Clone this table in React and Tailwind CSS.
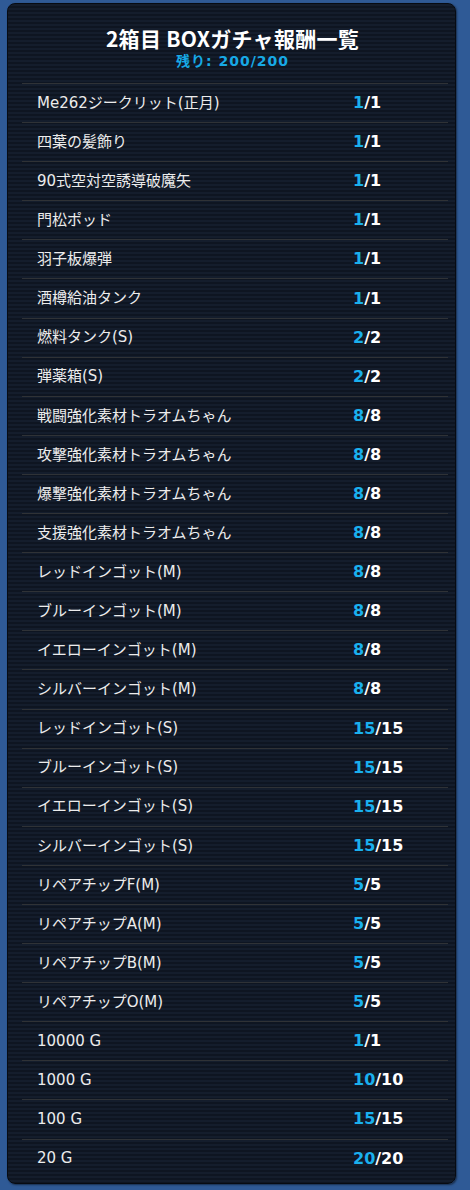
const rewards = [
  ['Me262ジークリット(正月)', 1, 1],
  ['四葉の髪飾り', 1, 1],
  ['90式空対空誘導破魔矢', 1, 1],
  ['門松ポッド', 1, 1],
  ['羽子板爆弾', 1, 1],
  ['酒樽給油タンク', 1, 1],
  ['燃料タンク(S)', 2, 2],
  ['弾薬箱(S)', 2, 2],
  ['戦闘強化素材トラオムちゃん', 8, 8],
  ['攻撃強化素材トラオムちゃん', 8, 8],
  ['爆撃強化素材トラオムちゃん', 8, 8],
  ['支援強化素材トラオムちゃん', 8, 8],
  ['レッドインゴット(M)', 8, 8],
  ['ブルーインゴット(M)', 8, 8],
  ['イエローインゴット(M)', 8, 8],
  ['シルバーインゴット(M)', 8, 8],
  ['レッドインゴット(S)', 15, 15],
  ['ブルーインゴット(S)', 15, 15],
  ['イエローインゴット(S)', 15, 15],
  ['シルバーインゴット(S)', 15, 15],
  ['リペアチップF(M)', 5, 5],
  ['リペアチップA(M)', 5, 5],
  ['リペアチップB(M)', 5, 5],
  ['リペアチップO(M)', 5, 5],
  ['10000 G', 1, 1],
  ['1000 G', 10, 10],
  ['100 G', 15, 15],
  ['20 G', 20, 20],
];

export default function App() {
  return (
    <div className="w-[470px] h-[1190px] bg-[#2f5a96] pt-[3px] pl-[7px] [font-family:'DejaVu_Sans','Noto_Sans_CJK_JP',sans-serif]">
      <div className="w-[449px] h-[1181px] rounded-lg border border-[#070b12] shadow-[1px_1px_2px_rgba(0,0,0,0.5)] bg-[repeating-linear-gradient(180deg,#141d2c_0px,#141d2c_2px,#0e1521_2px,#0e1521_4px)] pl-[14px] pr-[7px]">
        {/* Header */}
        <div className="pt-[22px] h-[79px] text-center pr-[5px]">
          <h1 className="text-[21px] leading-[24px] font-bold text-white [font-family:'Noto_Sans_CJK_JP',sans-serif] tracking-[0.3px]">
            2箱目 BOXガチャ報酬一覧
          </h1>
          <p className="mt-[3px] text-[14px] leading-[16px] font-bold text-[#17a9e6] tracking-[1px] [font-family:'DejaVu_Sans','Noto_Sans_CJK_JP',sans-serif]">
            残り: 200/200
          </p>
        </div>

        {/* List */}
        <div>
          {rewards.map(([name, cur, max], i) => (
            <div
              key={i}
              className="h-[39.1px] flex items-center border-t border-[#2f3236]"
            >
              <span className="w-[331px] pl-[15px] text-[15px] text-[#ececec] [font-family:'DejaVu_Sans','Noto_Sans_CJK_JP',sans-serif]">
                {name}
              </span>
              <span className="font-bold text-[16px] [font-family:'DejaVu_Sans',sans-serif]">
                <span className="text-[#1ab0ee]">{cur}</span>
                <span className="text-white">/{max}</span>
              </span>
            </div>
          ))}
        </div>
      </div>
    </div>
  );
}
